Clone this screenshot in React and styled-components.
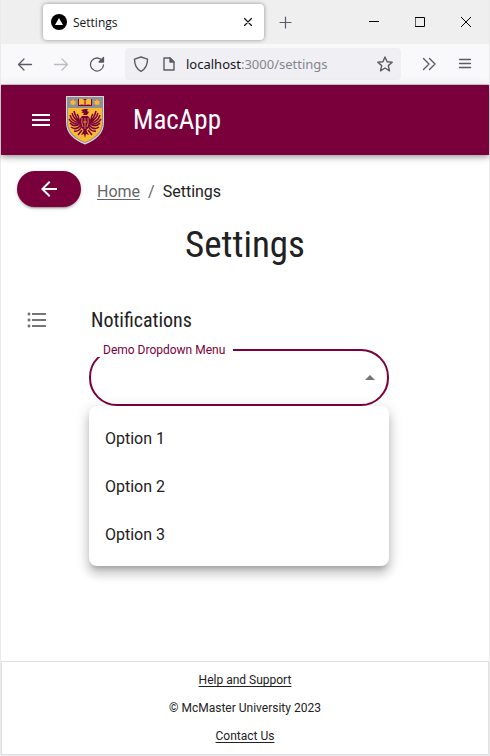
import React, { useState } from "react";
import styled, { createGlobalStyle } from "styled-components";

const maroon = "#7a003c";
const ink = "#212121";
const condensed = '"Roboto Condensed", Roboto, sans-serif';

const GlobalStyle = createGlobalStyle`
  * { box-sizing: border-box; }
  body { margin: 0; background: #fff; color: ${ink}; font-family: Roboto, sans-serif; font-size: 16px; }
  button, input, select { font: inherit; }
`;

const Window = styled.div`
  min-height: 100vh;
  display: flex;
  flex-direction: column;
  border: solid #ebebee;
  border-width: 0 1px 1px;
`;

const IconButton = styled.button`
  display: flex;
  align-items: center;
  justify-content: center;
  flex: none;
  width: ${(p) => p.$width || 36}px;
  height: 32px;
  padding: 0;
  border: 0;
  background: none;
  color: ${(p) => p.$color || "#5b5b66"};
`;

const TabBar = styled.div`
  display: flex;
  align-items: center;
  height: 44px;
  padding-left: 42px;
  background: #efefef;
`;

const Tab = styled.div`
  display: flex;
  align-items: center;
  gap: 6px;
  flex: 0 1 221px;
  height: 36px;
  padding-left: 8px;
  border-radius: 4px;
  background: #fff;
  box-shadow: 0 0 4px rgba(0, 0, 0, 0.4);
  color: #15141a;
  font: 12px "Open Sans", sans-serif;
`;

const TabTitle = styled.span`
  flex: 1;
`;

const WindowControls = styled.div`
  display: flex;
  margin-left: auto;
`;

const Toolbar = styled.div`
  display: flex;
  align-items: center;
  height: 41px;
  padding: 0 6px;
  background: #f9f9fb;
  border-bottom: 1px solid #cccccc;
`;

const AddressBar = styled.div`
  display: flex;
  align-items: center;
  flex: 1;
  min-width: 0;
  height: 32px;
  margin: 0 10px;
  border-radius: 4px;
  background: #f0f0f4;
`;

const Address = styled.div`
  flex: 1;
  padding-left: 5px;
  color: #85858e;
  font: 13px "Noto Sans", sans-serif;
`;

const Host = styled.span`
  color: #15141a;
`;

const AppBar = styled.header`
  display: flex;
  align-items: center;
  height: 70px;
  padding-left: 24px;
  background: ${maroon};
  color: #fff;
  box-shadow: 0 2px 4px -1px rgba(0, 0, 0, 0.2), 0 4px 5px rgba(0, 0, 0, 0.14), 0 1px 10px rgba(0, 0, 0, 0.12);
`;

const CrestArt = styled.svg`
  flex: none;
  width: 40px;
  height: 50px;
  margin: 0 28px 0 8px;
`;

const Brand = styled.span`
  font: 27px ${condensed};
`;

const Main = styled.main`
  flex: 1;
  padding: 16px;
`;

const PathRow = styled.div`
  display: flex;
  align-items: center;
  gap: 16px;
`;

const BackButton = styled.button`
  display: flex;
  align-items: center;
  justify-content: center;
  width: 64px;
  height: 36px;
  padding: 0;
  border: 0;
  border-radius: 18px;
  background: ${maroon};
  color: #fff;
  box-shadow: 0 3px 1px -2px rgba(0, 0, 0, 0.2), 0 2px 2px rgba(0, 0, 0, 0.14), 0 1px 5px rgba(0, 0, 0, 0.12);
`;

const Breadcrumbs = styled.nav`
  display: flex;
  gap: 8px;
  padding-top: 6px;
  line-height: 24px;
  color: #666;
`;

const HomeLink = styled.a`
  color: #666;
  text-underline-offset: 2px;
`;

const CurrentPage = styled.span`
  color: ${ink};
`;

const Title = styled.h1`
  margin: 14px 0 0;
  text-align: center;
  font: 400 37px/48px ${condensed};
`;

const Section = styled.section`
  display: grid;
  grid-template-columns: 56px minmax(0, 300px);
  column-gap: 16px;
  margin-top: 37px;
`;

const SectionIcon = styled.div`
  display: flex;
  padding: 2px 8px;
  color: #757575;
`;

const SectionTitle = styled.h2`
  margin: 0;
  padding-left: 2px;
  font: 400 20px/28px ${condensed};
`;

const SelectField = styled.div`
  position: relative;
  grid-column: 2;
  height: 57px;
  margin-top: 15px;
`;

const FieldLabel = styled.label`
  position: absolute;
  top: -7px;
  left: 8px;
  padding: 1px 8px 0 6px;
  background: #fff;
  color: ${maroon};
  font-size: 12px;
  line-height: 14px;
`;

const Select = styled.select`
  width: 100%;
  height: 100%;
  padding: 0 40px 0 16px;
  border: 2px solid ${maroon};
  border-radius: 28px;
  outline: 0;
  appearance: none;
  background: #fff;
  color: ${ink};
`;

const Caret = styled.svg`
  position: absolute;
  top: 16px;
  right: 7px;
  pointer-events: none;
  color: #757575;
`;

const Menu = styled.ul`
  position: absolute;
  top: 100%;
  left: 0;
  right: 0;
  margin: 0;
  padding: 8px 0;
  border-radius: 8px;
  background: #fff;
  list-style: none;
  box-shadow: 0 5px 5px -3px rgba(0, 0, 0, 0.2), 0 8px 10px 1px rgba(0, 0, 0, 0.14), 0 3px 14px 2px rgba(0, 0, 0, 0.12);
`;

const MenuItem = styled.li`
  padding: 13px 16px 11px;
  line-height: 24px;
`;

const Footer = styled.footer`
  display: flex;
  flex-direction: column;
  align-items: center;
  gap: 8px;
  padding: 8px;
  border: 1px solid #e0e0e0;
  font-size: 12px;
  line-height: 20px;
`;

const FooterLink = styled.a`
  color: ${ink};
  text-underline-offset: 2px;
`;

function Line({ size = 16, width = 1, d, children }) {
  return (
    <svg width={size} height={size} viewBox={`0 0 ${size} ${size}`} fill="none" stroke="currentColor" strokeWidth={width} strokeLinecap="round" strokeLinejoin="round" aria-hidden="true">
      {d && <path d={d} />}
      {children}
    </svg>
  );
}

function Solid({ d }) {
  return (
    <svg width="24" height="24" viewBox="0 0 24 24" fill="currentColor" aria-hidden="true">
      <path d={d} />
    </svg>
  );
}

function Crest() {
  return (
    <CrestArt viewBox="0 0 40 50" role="img" aria-label="University crest">
      <path d="M1 1H39V27C39 39 31 45 20 49.500C9 45 1 39 1 27Z" fill="#d9d6d8" />
      <path d="M2 2H38V27C38 38 30 44 20 48C10 44 2 38 2 27Z" fill="#8e8f93" />
      <path d="M3 13H37V27C37 37 30 43 20 47C10 43 3 37 3 27Z" fill="#fdb833" />
      <g fill="#fdb833">
        <path d="M8 4L9 6L11 6L10 8L11 9L8 10L5 9L6 8L5 6L7 6Z" />
        <path d="M32 4L33 6L35 6L34 8L35 9L32 10L29 9L30 8L29 6L31 6Z" />
      </g>
      <path d="M13 4H27V11H13Z" fill={maroon} />
      <path d="M14 4Q17 3 19.500 5V10Q17 9 14 10ZM26 4Q23 3 20.500 5V10Q23 9 26 10Z" fill="#fdb833" />
      <g fill={maroon}>
        <path d="M16 15L20 14L23 14L22 16L24 17L22 20L18 20L19 18L16 18L18 17Z" />
        <path d="M17 21H23L26 25L24 32L20 37L16 32L14 25Z" />
        <path d="M20 33L24 40L21 39L20 43L19 39L16 40Z" />
      </g>
      <g fill="none" stroke={maroon} strokeWidth="1.500">
        <path d="M15 26Q11 24 9 16M15 27Q9 25 7 18M15 28Q7 27 5 20M15 29Q8 30 4 24M15 29Q9 33 5 28M16 30Q11 36 6 32M17 31Q14 37 9 36M14 25Q14 21 12 19" />
        <path d="M25 26Q29 24 31 16M25 27Q31 25 33 18M25 28Q33 27 35 20M25 29Q32 30 36 24M25 29Q31 33 35 28M24 30Q29 36 34 32M23 31Q26 37 31 36M26 25Q26 21 28 19" />
        <path d="M17 35L13 40M23 35L27 40" />
      </g>
      <path d="M20 23V34M18 27H22M17 23Q16 27 18 32M23 23Q24 27 22 32" fill="none" stroke="#fdb833" strokeWidth="0.700" />
    </CrestArt>
  );
}

function BrowserChrome() {
  return (
    <>
      <TabBar>
        <Tab>
          <svg width="16" height="16" viewBox="0 0 16 16" aria-hidden="true">
            <circle cx="8" cy="8" r="8" fill="#000" />
            <path d="M8 4L12 11H4Z" fill="#fff" />
          </svg>
          <TabTitle>Settings</TabTitle>
          <IconButton $width={32} $color="#15141a" aria-label="Close tab">
            <Line size={8} width={1.2} d="M.5 .5L7.500 7.500M7.500 .5L.5 7.500" />
          </IconButton>
        </Tab>
        <IconButton $width={43} aria-label="New tab">
          <Line size={13} width={1.2} d="M6.500 1V12M1 6.500H12" />
        </IconButton>
        <WindowControls>
          <IconButton $width={46} $color="#000" aria-label="Minimize">
            <Line size={10} d="M0 4.500H10" />
          </IconButton>
          <IconButton $width={46} $color="#000" aria-label="Maximize">
            <Line size={10} d="M.5 .5H9.500V9.500H.5Z" />
          </IconButton>
          <IconButton $width={46} $color="#000" aria-label="Close window">
            <Line size={10} d="M0 0L10 10M10 0L0 10" />
          </IconButton>
        </WindowControls>
      </TabBar>
      <Toolbar>
        <IconButton aria-label="Go back">
          <Line width={1.3} d="M14.500 8.500H1.500M7 3L1.500 8.500L7 14" />
        </IconButton>
        <IconButton $color="#bcbcc2" aria-label="Go forward">
          <Line width={1.3} d="M1.500 8.500H14.500M9 3L14.500 8.500L9 14" />
        </IconButton>
        <IconButton aria-label="Reload">
          <Line width={1.3}>
            <path d="M13.500 5A6.500 6.500 0 1 0 14.500 9" />
            <path d="M14.500 1.500V6H10Z" fill="currentColor" />
          </Line>
        </IconButton>
        <AddressBar>
          <IconButton $width={32} aria-label="Tracking protection">
            <Line width={1.4} d="M8 1L14.500 3.200C14.500 9 12.500 13 8 15.300C3.500 13 1.500 9 1.500 3.200Z" />
          </IconButton>
          <IconButton $width={24} aria-label="Site information">
            <Line width={1.4}>
              <path d="M3 2H9L13 6V14H3Z" />
              <path d="M9 2V6H13Z" fill="currentColor" />
            </Line>
          </IconButton>
          <Address><Host>localhost</Host>:3000/settings</Address>
          <IconButton $width={32} aria-label="Bookmark page">
            <Line width={1.4} d="M8 1L10.100 5.700L15.200 6.200L11.300 9.600L12.500 14.800L8 12L3.500 14.800L4.700 9.600L.8 6.200L5.900 5.700Z" />
          </IconButton>
        </AddressBar>
        <IconButton aria-label="More tools">
          <Line width={1.4} d="M2.500 2.500L8 8L2.500 13.500M8.500 2.500L14 8L8.500 13.500" />
        </IconButton>
        <IconButton aria-label="Application menu">
          <Line width={1.3} d="M2.500 3.500H13.500M2.500 7.500H13.500M2.500 11.500H13.500" />
        </IconButton>
      </Toolbar>
    </>
  );
}

const options = ["Option 1", "Option 2", "Option 3"];

export default function App() {
  const [value, setValue] = useState("");
  return (
    <Window>
      <GlobalStyle />
      <BrowserChrome />
      <AppBar>
        <IconButton $width={32} $color="#fff" aria-label="Open navigation">
          <Solid d="M3 18h18v-2H3v2zm0-5h18v-2H3v2zm0-7v2h18V6H3z" />
        </IconButton>
        <Crest />
        <Brand>MacApp</Brand>
      </AppBar>
      <Main>
        <PathRow>
          <BackButton aria-label="Back">
            <Solid d="M20 11H7.830l5.590-5.590L12 4l-8 8 8 8 1.410-1.410L7.830 13H20v-2z" />
          </BackButton>
          <Breadcrumbs aria-label="Breadcrumb">
            <HomeLink href="#home">Home</HomeLink>
            <span>/</span>
            <CurrentPage>Settings</CurrentPage>
          </Breadcrumbs>
        </PathRow>
        <Title>Settings</Title>
        <Section>
          <SectionIcon>
            <Solid d="M4 10.500c-.83 0-1.500.67-1.500 1.500s.67 1.500 1.500 1.500 1.500-.67 1.500-1.500-.67-1.500-1.500-1.500zm0-6c-.83 0-1.500.67-1.500 1.500S3.170 7.500 4 7.500 5.500 6.830 5.500 6 4.830 4.500 4 4.500zm0 12c-.83 0-1.500.68-1.500 1.500s.68 1.500 1.500 1.500 1.500-.68 1.500-1.500-.67-1.500-1.500-1.500zM7 19h14v-2H7v2zm0-6h14v-2H7v2zm0-8v2h14V5H7z" />
          </SectionIcon>
          <SectionTitle>Notifications</SectionTitle>
          <SelectField>
            <Select id="demo-select" value={value} onChange={(e) => setValue(e.target.value)}>
              <option value="" />
              {options.map((o) => <option key={o}>{o}</option>)}
            </Select>
            <FieldLabel htmlFor="demo-select">Demo Dropdown Menu</FieldLabel>
            <Caret width="24" height="24" viewBox="0 0 24 24" fill="currentColor" aria-hidden="true">
              <path d="M7 15l5-5 5 5z" />
            </Caret>
            <Menu role="listbox" aria-label="Demo Dropdown Menu">
              {options.map((o) => (
                <MenuItem key={o} role="option" aria-selected={o === value} onClick={() => setValue(o)}>{o}</MenuItem>
              ))}
            </Menu>
          </SelectField>
        </Section>
      </Main>
      <Footer>
        <FooterLink href="#help">Help and Support</FooterLink>
        <span>© McMaster University 2023</span>
        <FooterLink href="#contact">Contact Us</FooterLink>
      </Footer>
    </Window>
  );
}
